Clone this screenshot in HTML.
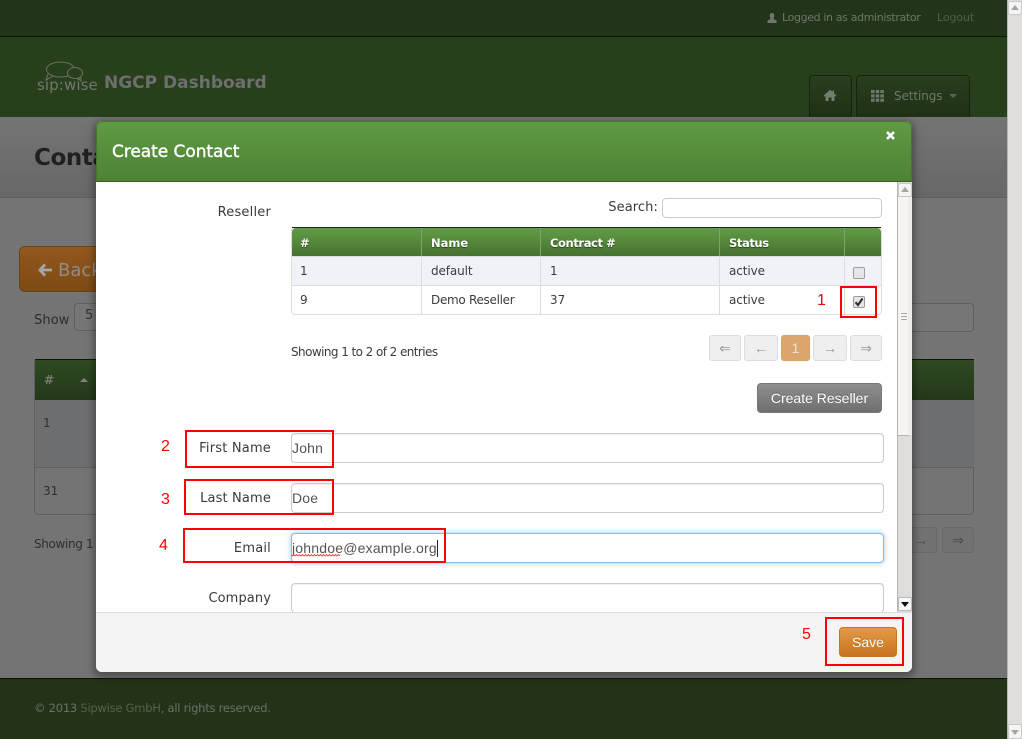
<!DOCTYPE html>
<html><head><meta charset="utf-8"><title>Create Contact</title>
<style>
html,body{margin:0;padding:0;width:1022px;height:739px;overflow:hidden;background:#747474;font-family:"DejaVu Sans","Liberation Sans",sans-serif;font-size:13px;color:#333}
div,span,a{position:absolute;box-sizing:border-box;white-space:nowrap}
svg{position:absolute;overflow:visible}
.lb{font-size:13px;color:#3a3a3a;line-height:18px;text-align:right;letter-spacing:.2px}
.in{background:#fff;border:1px solid #ccc;border-radius:4px;left:291px;width:593px;height:30px;box-shadow:inset 0 1px 1px rgba(0,0,0,.07)}
.val{left:292px;font-size:14px;line-height:20px;color:#555;font-family:"Liberation Sans",sans-serif;letter-spacing:.2px}
.red{border:2px solid #f00}
.num{font-family:"Liberation Sans",sans-serif;font-size:16px;color:#f00;line-height:18px}
.th{top:228px;height:28px;background:linear-gradient(#639c47,#467230);border-left:1px solid #79a864}
.tht{top:235px;color:#fff;font-weight:bold;font-size:11.5px;line-height:16px;text-shadow:0 1px 1px rgba(0,0,0,.5)}
.td{font-size:12px;color:#3c3c3c;line-height:16px}
.pg{top:335px;height:26px;background:#efefef;border:1px solid #ddd;border-radius:3px;color:#999;text-align:center;font-size:14px;line-height:24px;font-family:"Liberation Sans",sans-serif}
.ln{background:#ddd}
</style></head><body>

<!-- background -->
<div style="left:0;top:0;width:1007px;height:37px;background:#22351a"></div>
<div style="left:0;top:36px;width:1007px;height:1px;background:#0e170a"></div>
<div style="left:0;top:37px;width:1007px;height:80px;background:#283f1c"></div>
<svg style="left:766px;top:12px" width="12" height="12" viewBox="0 0 12 12"><path d="M6 1c1.700 0 2.300 1.200 2.300 2.500S7.500 6 7.500 7l3 1.500V11h-9V8.500l3-1.500C4.500 6 3.700 4.800 3.700 3.500S4.300 1 6 1z" fill="#6f766b"/></svg>
<span style="left:782px;top:10px;font-size:11px;line-height:16px;color:#6d7668;letter-spacing:-.36px">Logged in as administrator</span>
<span style="left:937px;top:10px;font-size:11px;line-height:16px;color:#50604a;letter-spacing:-.1px">Logout</span>

<svg style="left:37px;top:61px" width="62" height="32" viewBox="0 0 62 32" fill="none" stroke="#6a7065" stroke-width="1"><ellipse cx="23.500" cy="8.500" rx="14" ry="7.500"/><path d="M11 13l-2 6 7-4"/><ellipse cx="38" cy="12" rx="7.500" ry="5.500" fill="#283f1c"/><path d="M41 17l3 3v-4"/></svg>
<span style="left:37px;top:76px;font-size:15px;line-height:18px;color:#73776f;letter-spacing:.1px">sip:wise</span>
<span style="left:104px;top:71px;font-size:17px;line-height:24px;font-weight:bold;color:#6e6e6e">NGCP Dashboard</span>

<div style="left:809px;top:75px;width:43px;height:42px;background:linear-gradient(#283f1c,#1f3016);border:1px solid #16230f;border-bottom:0;border-radius:4px 4px 0 0"></div>
<svg style="left:823px;top:89px" width="14" height="13" viewBox="0 0 14 13"><path d="M7 .8L.5 6.700l1 1L2.500 6.800V12h3V8.500h3V12h3V6.800l1 .9 1-1L11 4.200V1.500H9.500v1.300z" fill="#757c70"/></svg>
<div style="left:856px;top:75px;width:114px;height:42px;background:linear-gradient(#283f1c,#1f3016);border:1px solid #16230f;border-bottom:0;border-radius:4px 4px 0 0"></div>
<svg style="left:871px;top:90px" width="13" height="12" viewBox="0 0 13 12" fill="#6f766b"><rect x="0" y="0" width="3.500" height="3.200"/><rect x="4.700" y="0" width="3.500" height="3.200"/><rect x="9.400" y="0" width="3.500" height="3.200"/><rect x="0" y="4.300" width="3.500" height="3.200"/><rect x="4.700" y="4.300" width="3.500" height="3.200"/><rect x="9.400" y="4.300" width="3.500" height="3.200"/><rect x="0" y="8.600" width="3.500" height="3.200"/><rect x="4.700" y="8.600" width="3.500" height="3.200"/><rect x="9.400" y="8.600" width="3.500" height="3.200"/></svg>
<span style="left:894px;top:88px;font-size:12px;line-height:17px;color:#6f766b;letter-spacing:-.1px">Settings</span>
<div style="left:949px;top:94px;width:0;height:0;border:4px solid transparent;border-top-color:#5b6356;border-bottom:0"></div>

<div style="left:0;top:117px;width:1007px;height:81px;background:linear-gradient(#747474,#676767);border-bottom:1px solid #5f5f5f"></div>
<span style="left:34px;top:142px;font-size:23px;line-height:32px;font-weight:bold;color:#1e2124;letter-spacing:-.4px">Contacts</span>

<div style="left:19px;top:246px;width:90px;height:46px;background:linear-gradient(#93581d,#7d4a15);border-radius:6px;border:1px solid #6d4213"></div>
<svg style="left:38px;top:263px" width="15" height="14" viewBox="0 0 15 14"><path d="M7 1.500L2 7l5 5.500M2.500 7H14" fill="none" stroke="#a8a6a3" stroke-width="2.800"/></svg>
<span style="left:58px;top:260px;font-size:18px;line-height:22px;color:#918d8a">Back</span>
<span style="left:34px;top:312px;font-size:13px;line-height:18px;color:#2d2d2d;letter-spacing:.1px">Show</span>
<div style="left:74px;top:303px;width:60px;height:28px;border:1px solid #5f5f5f;border-radius:4px;background:#767676"></div>
<span style="left:85px;top:307px;font-size:13px;line-height:18px;color:#333">5</span>
<div style="left:880px;top:303px;width:94px;height:29px;border:1px solid #5f5f5f;border-radius:4px;background:#767676"></div>

<div style="left:34px;top:359px;width:940px;height:156px;border:1px solid #5f5f5f;border-radius:4px"></div>
<div style="left:35px;top:359px;width:939px;height:1px;background:#111"></div>
<div style="left:35px;top:360px;width:939px;height:40px;background:linear-gradient(#2f4a22,#23381a)"></div>
<div style="left:35px;top:400px;width:939px;height:68px;background:#6d6e70;border-bottom:1px solid #5f5f5f"></div>
<span style="left:44px;top:372px;font-size:12px;line-height:16px;font-weight:bold;color:#777d72">#</span>
<div style="left:80px;top:378px;width:0;height:0;border:4px solid transparent;border-bottom-color:#7e867a;border-top:0"></div>
<span style="left:43px;top:415px;font-size:12px;line-height:16px;color:#2f2f2f">1</span>
<span style="left:43px;top:483px;font-size:12px;line-height:16px;color:#2f2f2f">31</span>
<span style="left:34px;top:536px;font-size:12px;line-height:16px;color:#2f2f2f;letter-spacing:-.35px">Showing 1 to 2</span>
<div style="left:905px;top:527px;width:32px;height:26px;border:1px solid #686868;border-radius:3px;background:#717171;color:#4b4b4b;text-align:center;line-height:24px;font-family:'Liberation Sans',sans-serif;font-size:14px">→</div>
<div style="left:942px;top:527px;width:32px;height:26px;border:1px solid #686868;border-radius:3px;background:#717171;color:#4b4b4b;text-align:center;line-height:24px;font-family:'Liberation Sans',sans-serif;font-size:14px">⇒</div>

<div style="left:0;top:678px;width:1007px;height:61px;background:#223317;border-top:1px solid #0b1207"></div>
<span style="left:34px;top:700px;font-size:11.5px;line-height:16px;color:#6c6f6a;letter-spacing:-.24px">© 2013 <span style="position:static;color:#54634c">Sipwise GmbH</span>, all rights reserved.</span>

<!-- page scrollbar -->
<div style="left:1007px;top:0;width:15px;height:739px;background:#dedddb;border-left:1px solid #b5b5b5"></div>
<div style="left:1008px;top:1px;width:14px;height:14px;background:#f5f4f2;border:1px solid #c9c9c9;border-radius:2px"></div>
<div style="left:1011px;top:5px;width:0;height:0;border:4px solid transparent;border-bottom:5px solid #a5a5a5;border-top:0"></div>
<div style="left:1008px;top:724px;width:14px;height:15px;background:#f5f4f2;border:1px solid #c9c9c9;border-radius:2px"></div>
<div style="left:1011px;top:730px;width:0;height:0;border:4px solid transparent;border-top:5px solid #a5a5a5;border-bottom:0"></div>

<!-- modal -->
<div style="left:96px;top:121px;width:816px;height:551px;background:#fff;border-radius:6px;box-shadow:0 3px 7px 3px rgba(0,0,0,.3)"></div>
<div style="left:96px;top:121px;width:816px;height:61px;background:linear-gradient(#5f9a43,#4e8235);border:1px solid #477530;border-bottom:1px solid #3a6126;border-radius:6px 6px 0 0"></div>
<span style="left:112px;top:140px;font-size:17px;line-height:24px;color:#fff;-webkit-text-stroke:.4px #fff;letter-spacing:-.05px">Create Contact</span>
<svg style="left:885px;top:130px" width="11" height="11" viewBox="0 0 11 11"><path d="M2 2l7 7M9 2l-7 7" stroke="#fff" stroke-width="2.600"/></svg>

<span class="lb" style="left:170px;width:101px;top:204px">Reseller</span>
<span class="lb" style="left:560px;width:98px;top:199px;letter-spacing:.1px">Search:</span>
<div style="left:662px;top:198px;width:220px;height:20px;border:1px solid #ccc;border-radius:4px;background:#fff"></div>

<div style="left:291px;top:227px;width:591px;height:88px;border:1px solid #ddd;border-radius:4px;background:#fff;overflow:hidden"></div>
<div style="left:292px;top:227px;width:589px;height:1px;background:#222"></div>
<div class="th" style="left:292px;width:129px;border-left:0;border-radius:4px 0 0 0"></div>
<div class="th" style="left:421px;width:119px"></div>
<div class="th" style="left:540px;width:179px"></div>
<div class="th" style="left:719px;width:125px"></div>
<div class="th" style="left:844px;width:37px;border-radius:0 4px 0 0"></div>
<div style="left:292px;top:256px;width:589px;height:30px;background:#eff2f6;border-top:1px solid #ddd;border-bottom:1px solid #ddd"></div>
<div class="ln" style="left:421px;top:256px;width:1px;height:58px"></div>
<div class="ln" style="left:540px;top:256px;width:1px;height:58px"></div>
<div class="ln" style="left:719px;top:256px;width:1px;height:58px"></div>
<div class="ln" style="left:844px;top:256px;width:1px;height:58px"></div>
<span class="tht" style="left:300px">#</span>
<span class="tht" style="left:431px">Name</span>
<span class="tht" style="left:550px;letter-spacing:-.4px">Contract #</span>
<span class="tht" style="left:729px;letter-spacing:-.4px">Status</span>
<span class="td" style="left:300px;top:263px">1</span>
<span class="td" style="left:431px;top:263px;letter-spacing:-.1px">default</span>
<span class="td" style="left:550px;top:263px">1</span>
<span class="td" style="left:729px;top:263px;letter-spacing:-.1px">active</span>
<span class="td" style="left:300px;top:292px">9</span>
<span class="td" style="left:431px;top:292px;letter-spacing:-.3px">Demo Reseller</span>
<span class="td" style="left:550px;top:292px">37</span>
<span class="td" style="left:729px;top:292px;letter-spacing:-.1px">active</span>

<div style="left:853px;top:267px;width:12px;height:12px;background:#e6e6e6;border:1px solid #9d9d9d;border-radius:2px"></div>
<div style="left:853px;top:296px;width:12px;height:12px;background:#e6e6e6;border:1px solid #9d9d9d;border-radius:2px"></div>
<svg style="left:853px;top:296px" width="12" height="12" viewBox="0 0 12 12"><path d="M2.500 6.200l2.500 2.800 4.500-6.500" fill="none" stroke="#333" stroke-width="2.200"/></svg>

<span class="td" style="left:291px;top:344px;letter-spacing:-.57px">Showing 1 to 2 of 2 entries</span>
<div class="pg" style="left:709px;width:32px">⇐</div>
<div class="pg" style="left:744px;width:34px">←</div>
<div class="pg" style="left:781px;width:29px;background:#dba66d;border-color:#d8a36b;color:#f3e3d0">1</div>
<div class="pg" style="left:813px;width:34px">→</div>
<div class="pg" style="left:850px;width:32px">⇒</div>

<div style="left:757px;top:383px;width:125px;height:30px;background:linear-gradient(#8f8f8f,#6f6f6f);border:1px solid #777;border-radius:4px;color:#fff;font-family:'Liberation Sans',sans-serif;font-size:14px;line-height:28px;text-align:center;text-shadow:0 -1px 0 rgba(0,0,0,.25)">Create Reseller</div>

<span class="lb" style="left:170px;width:101px;top:440px">First Name</span>
<div class="in" style="top:433px"></div>
<span class="val" style="top:438px">John</span>
<span class="lb" style="left:170px;width:101px;top:490px;letter-spacing:.15px">Last Name</span>
<div class="in" style="top:483px"></div>
<span class="val" style="top:488px">Doe</span>
<span class="lb" style="left:170px;width:101px;top:540px">Email</span>
<div class="in" style="top:533px;border-color:#82bdf0;box-shadow:0 0 6px rgba(82,168,236,.6)"></div>
<span class="val" style="top:538px">johndoe@example.org</span>
<div style="left:437px;top:540px;width:1px;height:17px;background:#222"></div>
<svg style="left:292px;top:554px" width="52" height="3"><path d="M0 2l1.500-1.500 1.500 1.500 1.500-1.500 1.500 1.500 1.500-1.500 1.500 1.500 1.500-1.500 1.500 1.500 1.500-1.500 1.500 1.500 1.500-1.500 1.500 1.500 1.500-1.500 1.500 1.500 1.500-1.500 1.500 1.500 1.500-1.500 1.500 1.500 1.500-1.500 1.500 1.500 1.500-1.500 1.500 1.500 1.500-1.500 1.500 1.500 1.500-1.500 1.500 1.500 1.500-1.500 1.500 1.500 1.500-1.500 1.500 1.500 1.500-1.500 1.500 1.500" fill="none" stroke="#e33" stroke-width=".8"/></svg>
<span class="lb" style="left:170px;width:101px;top:590px;letter-spacing:.1px">Company</span>
<div class="in" style="top:583px"></div>

<!-- inner scrollbar -->
<div style="left:897px;top:182px;width:15px;height:430px;background:#dedddb;border-left:1px solid #b5b5b5"></div>
<div style="left:898px;top:197px;width:14px;height:239px;background:#f5f4f1;border-bottom:1px solid #b5b5b5;border-right:4px solid #eeedeb"></div>
<div style="left:898px;top:183px;width:14px;height:14px;background:#f5f4f2;border:1px solid #c9c9c9;border-radius:2px"></div>
<div style="left:901px;top:187px;width:0;height:0;border:4px solid transparent;border-bottom:5px solid #a5a5a5;border-top:0"></div>
<div style="left:901px;top:313px;width:6px;height:1px;background:#aaa"></div>
<div style="left:901px;top:316px;width:6px;height:1px;background:#aaa"></div>
<div style="left:901px;top:319px;width:6px;height:1px;background:#aaa"></div>
<div style="left:898px;top:597px;width:14px;height:14px;background:#f8f8f6;border:1px solid #bbb;border-radius:2px"></div>
<div style="left:901px;top:602px;width:0;height:0;border:4px solid transparent;border-top:5px solid #111;border-bottom:0"></div>

<!-- modal footer -->
<div style="left:96px;top:612px;width:816px;height:60px;background:#f4f4f4;border-top:1px solid #ddd;border-radius:0 0 6px 6px"></div>
<div style="left:839px;top:627px;width:58px;height:30px;background:linear-gradient(#e59a45,#c7741f);border:1px solid #c47722;border-radius:4px;color:#fff;font-family:'Liberation Sans',sans-serif;font-size:14px;line-height:28px;text-align:center;text-shadow:0 -1px 0 rgba(0,0,0,.2)">Save</div>

<!-- annotations -->
<div class="red" style="left:840px;top:286px;width:37px;height:32px"></div>
<div class="red" style="left:185px;top:430px;width:149px;height:38px"></div>
<div class="red" style="left:184px;top:479px;width:150px;height:36px"></div>
<div class="red" style="left:183px;top:528px;width:263px;height:35px"></div>
<div class="red" style="left:825px;top:617px;width:79px;height:49px"></div>
<span class="num" style="left:817px;top:292px">1</span>
<span class="num" style="left:161px;top:438px">2</span>
<span class="num" style="left:161px;top:491px">3</span>
<span class="num" style="left:159px;top:537px">4</span>
<span class="num" style="left:802px;top:626px">5</span>
</body></html>
